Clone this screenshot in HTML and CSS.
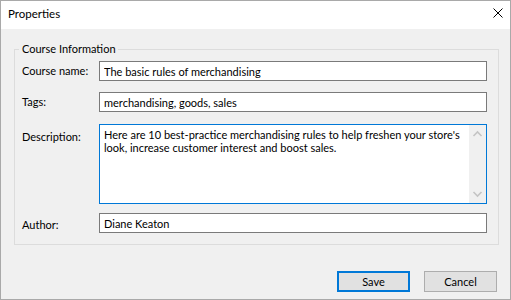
FILE: index.html
```html
<!DOCTYPE html>
<html lang="en">
<head>
    <meta charset="UTF-8">
    <title>Properties</title>
    <link rel="stylesheet" href="styles.css">
</head>
<body>
    <div class="window">
        <div class="titlebar">
            <span class="title">Properties</span>
            <svg class="close-icon" width="10" height="10" viewBox="0 0 10 10">
                <path d="M0.5 0.5 L9.5 9.5 M9.5 0.5 L0.5 9.5" stroke="#000" stroke-width="1" fill="none"/>
            </svg>
        </div>
        <div class="content">
            <fieldset class="group">
                <legend class="group-title">Course Information</legend>
                <div class="row">
                    <label class="field-label" for="courseName">Course name:</label>
                    <input class="text-input" id="courseName" type="text" value="The basic rules of merchandising">
                </div>
                <div class="row">
                    <label class="field-label" for="tags">Tags:</label>
                    <input class="text-input" id="tags" type="text" value="merchandising, goods, sales">
                </div>
                <div class="row row-desc">
                    <label class="field-label">Description:</label>
                    <div class="text-area">
                        <div class="text-area-body">Here are 10 best-practice merchandising rules to help freshen your store's<br>look, increase customer interest and boost sales.</div>
                        <div class="scrollbar">
                            <svg width="17" height="17" viewBox="0 0 17 17">
                                <path d="M4.5 11 L8.5 7 L12.5 11" stroke="#c4c4c4" stroke-width="1.6" fill="none"/>
                            </svg>
                            <svg width="17" height="17" viewBox="0 0 17 17">
                                <path d="M4.5 6 L8.5 10 L12.5 6" stroke="#c4c4c4" stroke-width="1.6" fill="none"/>
                            </svg>
                        </div>
                    </div>
                </div>
                <div class="row row-author">
                    <label class="field-label" for="author">Author:</label>
                    <input class="text-input" id="author" type="text" value="Diane Keaton">
                </div>
            </fieldset>
            <div class="actions">
                <button class="btn btn-default">Save</button>
                <button class="btn">Cancel</button>
            </div>
        </div>
    </div>
</body>
</html>
```

FILE: styles.css
```css
body {
    margin: 0;
    font-family: Lato, "Open Sans", sans-serif;
    font-size: 11px;
    color: #000;
}
.window {
    width: 511px;
    height: 300px;
    box-sizing: border-box;
    border: 1px solid #a9a9a9;
    background-color: #f0f0f0;
    display: flex;
    flex-direction: column;
}
.titlebar {
    height: 28px;
    box-sizing: border-box;
    background-color: #fff;
    display: flex;
    justify-content: space-between;
    align-items: flex-start;
    padding: 5px 7px 0 7px;
}
.title {
    line-height: 16px;
    font-size: 11.5px;
}
.close-icon {
    margin-top: 2px;
}
.content {
    flex: 1;
    padding: 12px 11px 0 13px;
}
.group {
    margin: 0;
    border: 1px solid #dcdcdc;
    padding: 4px 11px 11px 7px;
}
.group-title {
    line-height: 16px;
    margin-left: -3px;
    padding: 0 2px 0 3px;
}
.row {
    display: flex;
    align-items: center;
}
.row + .row {
    margin-top: 11px;
}
.row-desc {
    align-items: flex-start;
}
.row + .row-desc {
    margin-top: 12px;
}
.row + .row-author {
    margin-top: 9px;
}
.field-label {
    width: 77px;
    flex-shrink: 0;
    line-height: 16px;
}
.row-desc .field-label {
    padding-top: 5px;
}
.row-author .field-label {
    padding-top: 4px;
}
.text-input {
    flex: 1;
    height: 20px;
    box-sizing: border-box;
    margin: 0;
    border: 1px solid #7a7a7a;
    padding: 0 4px;
    font: inherit;
    color: #000;
    background-color: #fff;
    outline: none;
}
.text-area {
    flex: 1;
    height: 80px;
    box-sizing: border-box;
    border: 1px solid #0078d7;
    background-color: #fff;
    display: flex;
}
.text-area-body {
    flex: 1;
    padding: 3px 4px;
    line-height: 13px;
    white-space: nowrap;
    overflow: hidden;
}
.scrollbar {
    width: 17px;
    background-color: #f0f0f0;
    display: flex;
    flex-direction: column;
    justify-content: space-between;
}
.scrollbar svg {
    display: block;
}
.actions {
    display: flex;
    justify-content: flex-end;
    gap: 14px;
    margin: 26px 2px 0 0;
}
.btn {
    width: 73px;
    height: 21px;
    box-sizing: border-box;
    margin: 0;
    padding: 0;
    border: 1px solid #adadad;
    background-color: #e1e1e1;
    font: inherit;
    color: #000;
}
.btn-default {
    border: 2px solid #0078d7;
}
```
